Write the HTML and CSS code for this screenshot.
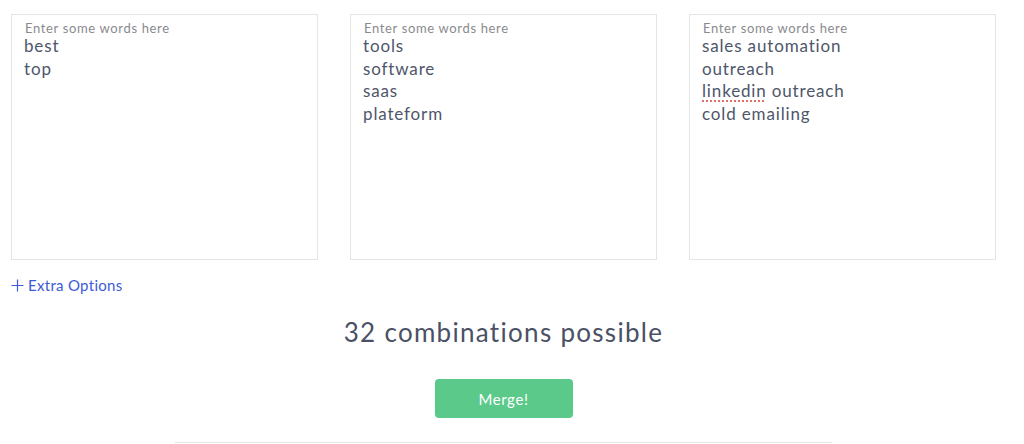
FILE: index.html
```html
<!DOCTYPE html>
<html lang="en">
<head>
<meta charset="utf-8">
<title>Merge words</title>
<link rel="stylesheet" href="styles.css">
</head>
<body>
<main class="page">
  <section class="fields">
    <div class="field">
      <div class="field-label">Enter some words here</div>
      <div class="field-text">
        <div>best</div>
        <div>top</div>
      </div>
    </div>
    <div class="field">
      <div class="field-label">Enter some words here</div>
      <div class="field-text">
        <div>tools</div>
        <div>software</div>
        <div>saas</div>
        <div>plateform</div>
      </div>
    </div>
    <div class="field">
      <div class="field-label">Enter some words here</div>
      <div class="field-text">
        <div>sales automation</div>
        <div>outreach</div>
        <div><span class="misspelled">linkedin</span> outreach</div>
        <div>cold emailing</div>
      </div>
    </div>
  </section>
  <a class="extra" href="#">
    <svg class="plus" width="13" height="13" viewBox="0 0 13 13"><path d="M6.5 0.5v12M0.5 6.5h12" stroke="currentColor" stroke-width="1.2" fill="none"/></svg>
    <span>Extra Options</span>
  </a>
  <h2 class="count">32 combinations possible</h2>
  <div class="actions">
    <button class="merge" type="button">Merge!</button>
  </div>
  <div class="divider"></div>
</main>
</body>
</html>
```
FILE: styles.css
```css
html, body {
  margin: 0;
  padding: 0;
  background: #ffffff;
}
body {
  font-family: Lato, "Open Sans", Arial, sans-serif;
  color: #4b5263;
  overflow: hidden;
}
.page {
  width: 985px;
  padding: 14px 0 0 11px;
  display: flex;
  flex-direction: column;
}
.fields {
  display: grid;
  grid-template-columns: repeat(3, 307px);
  column-gap: 32px;
}
.field {
  box-sizing: border-box;
  height: 246px;
  border: 1px solid #e4e5ea;
  padding: 6px 12px 0 12px;
}
.field-label {
  font-size: 13px;
  line-height: 14px;
  letter-spacing: 0.05em;
  color: #8a8a8e;
  padding-left: 1px;
}
.field-text {
  font-size: 17px;
  line-height: 22.7px;
  letter-spacing: 0.05em;
  color: #4e566a;
}
.misspelled {
  text-decoration: underline dotted #e0554f;
  text-underline-offset: 3px;
}
.extra {
  margin-top: 16px;
  align-self: flex-start;
  display: flex;
  align-items: center;
  gap: 4px;
  color: #3d5bd6;
  font-size: 15px;
  line-height: 18px;
  letter-spacing: 0.02em;
  text-decoration: none;
}
.plus {
  display: block;
}
.count {
  margin: 22px 0 0 0;
  text-align: center;
  font-weight: 400;
  font-size: 26px;
  line-height: 32px;
  letter-spacing: 0.05em;
  color: #4a5164;
}
.actions {
  display: flex;
  justify-content: center;
  margin-top: 31px;
}
.merge {
  width: 138px;
  height: 39px;
  border: none;
  border-radius: 4px;
  background: #5bc98a;
  color: #ffffff;
  font-family: Lato, "Open Sans", Arial, sans-serif;
  font-size: 15px;
  letter-spacing: 0.04em;
  cursor: pointer;
}
.divider {
  margin: 24px auto 0 auto;
  width: 657px;
  height: 1px;
  background: #e6e6e6;
}
```
